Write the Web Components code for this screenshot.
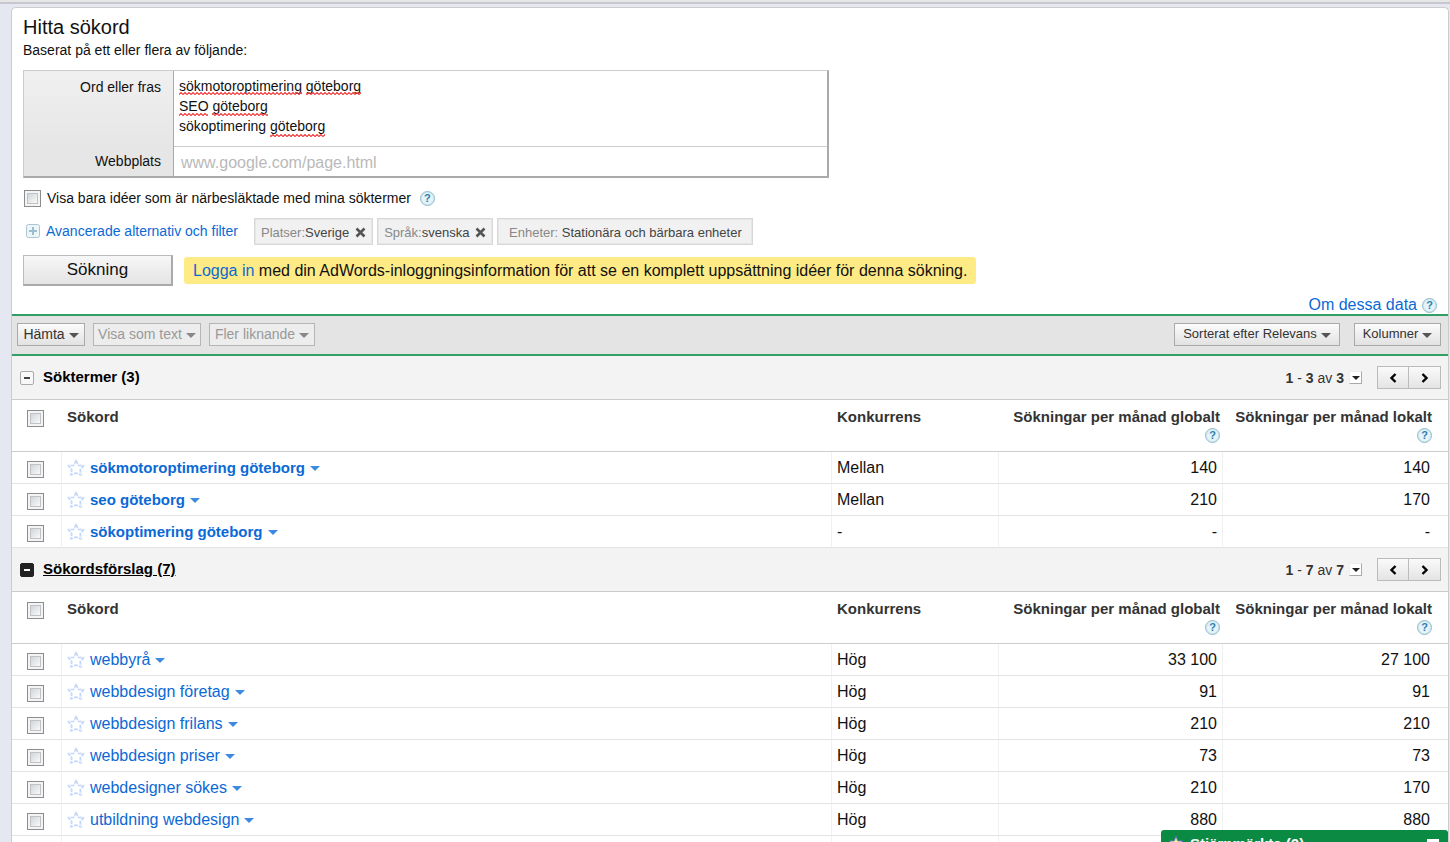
<!DOCTYPE html>
<html lang="sv">
<head>
<meta charset="utf-8">
<title>Hitta sökord</title>
<style>
html, body { margin: 0; height: 100%; }
body { overflow: hidden; background: #e5e8f0; font-family: "Liberation Sans", Arial, sans-serif; color: #111; }
</style>
</head>
<body>
<keyword-app></keyword-app>
<script>
const base = `<style>
*, *::before, *::after { box-sizing: border-box; }
a { color: #0b69d6; text-decoration: none; }
button, input, textarea { font-family: inherit; margin: 0; }
</style>`;

function define(name, html, setup) {
  const template = document.createElement('template');
  template.innerHTML = base + html;
  customElements.define(name, class extends HTMLElement {
    constructor() {
      super();
      this.attachShadow({ mode: 'open' }).append(template.content.cloneNode(true));
    }
    connectedCallback() {
      if (setup && !this.ready) { this.ready = true; setup(this, this.shadowRoot); }
    }
  });
}

define('help-dot', `<style>
:host { display: inline-block; width: 15px; height: 15px; vertical-align: middle; }
a { display: block; width: 15px; height: 15px; border: 1px solid #8fbccb; border-radius: 50%; background: #e6f4f9;
  box-shadow: inset 0 0 0 1px #cfe6ee; color: #2f7fae; font-size: 11px; line-height: 13px; font-weight: bold; text-align: center; }
</style><a href="#" aria-label="Hjälp">?</a>`);

define('tick-box', `<style>
:host { display: inline-block; width: 17px; height: 17px; }
input { appearance: none; display: block; width: 17px; height: 17px; border: 1px solid #8a8c8e; border-radius: 0;
  background: linear-gradient(135deg, #c4c9d0, #f6f6f6 75%); box-shadow: inset 0 0 0 2px #f4f4f4, inset 0 0 0 3px #bfc3c8; }
</style><input type="checkbox">`, (host, root) => {
  root.querySelector('input').setAttribute('aria-label', host.getAttribute('label'));
});

define('filter-chip', `<style>
:host { display: flex; align-items: center; height: 27px; padding: 2px 6px 0; border: 1px solid #d8d8d8; background: #f1f1f1;
  box-shadow: inset 0 0 0 1px #e6e6e6; font-size: 13px; color: #444; white-space: pre; }
:host([wide]) { min-width: 256px; justify-content: center; }
.name { color: #888; }
button { display: none; width: 11px; height: 11px; padding: 0; border: 0; margin-left: 6px; background: none; }
:host([removable]) button { display: block; }
svg { display: block; }
</style><span class="name"><slot name="name"></slot></span><slot></slot>
<button aria-label="Ta bort"><svg width="11" height="11" viewBox="0 0 11 11"><path d="M1.5 1.5 9.5 9.5M9.5 1.5 1.5 9.5" stroke="#555" stroke-width="2.6"/></svg></button>`);

define('menu-button', `<style>
:host { display: block; }
button { display: flex; align-items: center; justify-content: center; gap: 4px; width: 100%; height: 23px; padding: 0 5px;
  border: 1px solid #aaa; background: linear-gradient(#fbfbfb, #e2e2e2); color: #333; font-size: 14px; line-height: 20px; white-space: nowrap; }
i { border: 5px solid transparent; border-top-color: #555; border-bottom: 0; margin-top: 3px; }
:host([disabled]) button { background: #ededed; border-color: #b5b5b5; color: #999; }
:host([disabled]) i { border-top-color: #888; }
:host([small]) button { font-size: 13px; }
</style><button><slot></slot><i></i></button>`, (host, root) => {
  root.querySelector('button').disabled = host.hasAttribute('disabled');
});

define('page-nav', `<style>
:host { display: flex; align-items: center; font-size: 14px; color: #333; }
.pick { width: 13px; height: 13px; padding: 0; margin: 0 15px 0 5px; border: 1px solid #eee; border-right-color: #aaa; border-bottom-color: #aaa;
  background: #fff; display: flex; align-items: center; justify-content: center; }
.pick i { border: 4px solid transparent; border-top-color: #222; border-bottom: 0; }
.step { width: 32px; height: 23px; padding: 0; border: 1px solid #bbb; background: linear-gradient(#fafafa, #e4e4e4); display: flex; align-items: center; justify-content: center; }
.step + .step { border-left: 0; }
</style><span><slot></slot></span><button class="pick" aria-label="Välj sida"><i></i></button>
<button class="step" aria-label="Föregående"><svg width="8" height="10" viewBox="0 0 8 10"><path d="M6.5 1 2.5 5l4 4" fill="none" stroke="#000" stroke-width="2.4"/></svg></button>
<button class="step" aria-label="Nästa"><svg width="8" height="10" viewBox="0 0 8 10"><path d="M1.5 1l4 4-4 4" fill="none" stroke="#000" stroke-width="2.4"/></svg></button>`);

define('keyword-form', `<style>
:host { display: block; padding: 7px 11px 0 11px; font-size: 14px; }
h1 { margin: 0; font-size: 20px; line-height: 24px; font-weight: normal; }
p { margin: 1px 0 10px; line-height: 20px; }
.box { display: grid; grid-template-columns: 150px 1fr; width: 806px; max-width: 100%; border: 1px solid #ccc; border-right: 2px solid #aaa; border-bottom: 2px solid #aaa; }
.box label { padding: 6px 12px 0 0; text-align: right; line-height: 20px; border-right: 1px solid #aaa; background: #efefef; }
.box label[for=site] { padding-top: 4px; background: #e6e6e6; }
.box label[for=words] { background: linear-gradient(#f0f0f0, #e6e6e6); }
.area { position: relative; border-bottom: 1px solid #ccc; height: 76px; }
textarea { display: block; width: 100%; height: 75px; resize: none; border: 0; outline: 0; padding: 5px 5px 0; font-size: 14px; line-height: 20px; color: #111; background: #fff; overflow: hidden; }
.spell { position: absolute; left: 5px; top: 0; pointer-events: none; }
input[type=url] { display: block; width: 100%; height: 29px; border: 0; outline: 0; padding: 2px 7px 0; font-size: 16px; background: #fff; }
input::placeholder { color: #b9b9b9; opacity: 1; }
.row { display: flex; align-items: center; margin-top: 10px; }
.near { height: 20px; gap: 6px; padding-left: 1px; }
.near help-dot { margin-left: 3px; }
.adv { gap: 4px; }
.adv > a { display: flex; align-items: center; gap: 6px; padding: 0 0 2px 3px; margin-right: 12px; }
.go { width: 150px; height: 31px; border: 1px solid #bbb; border-right: 2px solid #aaa; border-bottom: 2px solid #aaa; background: linear-gradient(#f7f7f7, #e4e4e4); font-size: 17px; color: #111; }
.note { margin-left: 11px; height: 27px; line-height: 27px; padding: 0 9px; border-radius: 3px; background: #ffeb86; font-size: 16px; white-space: nowrap; }
.about { display: flex; justify-content: flex-end; gap: 5px; height: 18px; margin-top: 10px; font-size: 16px; line-height: 18px; }
.about help-dot { margin-top: 2px; }
</style>
<h1>Hitta sökord</h1>
<p>Baserat på ett eller flera av följande:</p>
<div class="box">
<label for="words">Ord eller fras</label>
<div class="area"><textarea id="words" spellcheck="false">sökmotoroptimering göteborg
SEO göteborg
sökoptimering göteborg</textarea>
<svg class="spell" width="200" height="72" aria-hidden="true"><defs><pattern id="w" width="4" height="3" patternUnits="userSpaceOnUse"><path d="M-1 3.5 2 .5 5 3.5" fill="none" stroke="#e33" stroke-width="1.1"/></pattern></defs>
<g fill="url(#w)"><rect y="21" width="123" height="3"/><rect x="127" y="21" width="55" height="3"/><rect y="42" width="29" height="3"/><rect x="33" y="42" width="56" height="3"/><rect x="91" y="63" width="55" height="3"/></g></svg></div>
<label for="site">Webbplats</label>
<input id="site" type="url" placeholder="www.google.com/page.html">
</div>
<div class="row near"><tick-box label="Visa bara närbesläktade idéer"></tick-box><span>Visa bara idéer som är närbesläktade med mina söktermer</span><help-dot></help-dot></div>
<div class="row adv"><a href="#"><svg width="14" height="14" viewBox="0 0 14 14"><rect x=".5" y=".5" width="13" height="13" rx="2" fill="#eef5f8" stroke="#a9c6d2"/><path d="M3 7h8M7 3v8" stroke="#9dbecb" stroke-width="2"/></svg>Avancerade alternativ och filter</a>
<filter-chip removable><span slot="name">Platser:</span>Sverige</filter-chip>
<filter-chip removable><span slot="name">Språk:</span>svenska</filter-chip>
<filter-chip wide><span slot="name">Enheter: </span>Stationära och bärbara enheter</filter-chip></div>
<div class="row"><button class="go">Sökning</button><div class="note"><a href="#">Logga in</a> med din AdWords-inloggningsinformation för att se en komplett uppsättning idéer för denna sökning.</div></div>
<div class="about"><a href="#">Om dessa data</a><help-dot></help-dot></div>`);

define('tool-bar', `<style>
:host { display: flex; align-items: center; gap: 8px; height: 42px; padding: 0 7px 2px 5px; border: solid #32a066; border-width: 2px 0; background: #e4e4e4; }
.fill { flex: 1; }
.a { width: 68px; } .b { width: 108px; } .c { width: 106px; } .d { width: 166px; margin-right: 6px; } .e { width: 87px; }
</style><menu-button class="a">Hämta</menu-button><menu-button class="b" disabled>Visa som text</menu-button><menu-button class="c" disabled>Fler liknande</menu-button>
<span class="fill"></span><menu-button class="d" small>Sorterat efter Relevans</menu-button><menu-button class="e" small>Kolumner</menu-button>`);

define('keyword-table', `<style>
:host { display: block; }
header { display: flex; align-items: center; height: 44px; padding: 0 7px 0 8px; background: #f3f3f3; border-bottom: 1px solid #ccc; }
.fold { display: block; width: 14px; height: 14px; padding: 0; border: 1px solid #aaa; border-radius: 2px; background: #f8f8f8; margin-right: 9px; }
.fold::before { content: ""; display: block; width: 6px; height: 2px; margin: 0 auto; background: #444; }
:host([active]) .fold { background: #222; border-color: #222; }
:host([active]) .fold::before { background: #fff; }
h2 { flex: 1; margin: 0; padding-bottom: 2px; font-size: 15px; line-height: 20px; color: #000; }
:host([active]) h2 { text-decoration: underline; }
table { width: 100%; table-layout: fixed; border-collapse: separate; border-spacing: 0; background: #fff; font-size: 16px; }
th { height: 52px; padding: 8px 3px 0 5px; border-bottom: 1px solid #ccc; vertical-align: top; text-align: left; font-size: 15px; line-height: 18px; color: #333; white-space: nowrap; }
th help-dot { display: block; margin: 2px 0 0 auto; }
td { height: 32px; padding: 0 5px; border-bottom: 1px solid #e2e2e2; border-right: 1px solid #f0f0f0; line-height: 20px; white-space: nowrap; }
td:last-child { border-right: 0; }
.num { text-align: right; }
th.num:last-child { padding-right: 16px; }
td.num:last-child { padding-right: 18px; }
th:first-child { padding: 10px 0 0 15px; } td:first-child { padding: 3px 0 0 15px; }
tick-box { display: block; }
.word { display: flex; align-items: center; gap: 5px; }
.word i { border: 5px solid transparent; border-top-color: #3d8be0; border-bottom: 0; margin-top: 1px; }
:host([strong]) .word a { font-weight: bold; font-size: 15px; }
.col-tick { width: 50px; } .col-comp { width: 167px; } .col-global { width: 224px; } .col-local { width: 225px; }
</style>
<header><button class="fold" aria-label="Visa eller dölj"></button><h2><slot></slot></h2><page-nav></page-nav></header>
<table><colgroup><col class="col-tick"><col><col class="col-comp"><col class="col-global"><col class="col-local"></colgroup>
<thead><tr><th><tick-box label="Markera alla"></tick-box></th><th>Sökord</th><th>Konkurrens</th><th class="num">Sökningar per månad globalt<help-dot></help-dot></th><th class="num">Sökningar per månad lokalt<help-dot></help-dot></th></tr></thead>
<tbody></tbody></table>`, (host, root) => {
  const rows = keywords[host.getAttribute('list')];
  root.querySelector('page-nav').innerHTML = `<b>1</b> - <b>${rows.length}</b> av <b>${rows.length}</b>`;
  root.querySelector('tbody').innerHTML = rows.map(([word, comp, global, local]) => word ? `<tr>
<td><tick-box label="${word}"></tick-box></td>
<td><div class="word"><svg width="18" height="18" viewBox="0 0 18 18"><path d="M9 1.5 11.2 6.3 16.6 6.6 13.2 10.7 14 16 9 14 4 16 4.8 10.7 1.4 6.6 6.8 6.3Z" fill="#fff" stroke="#c3d8fb" stroke-width="1.7" stroke-linejoin="round" stroke-dasharray="4 1"/></svg><a href="#">${word}</a><i></i></div></td>
<td>${comp}</td><td class="num">${global}</td><td class="num">${local}</td></tr>` : '<tr><td></td><td></td><td></td><td></td><td></td></tr>').join('');
});

define('starred-bar', `<style>
:host { position: fixed; right: 2px; bottom: -14px; width: 287px; height: 26px; display: flex; align-items: center; gap: 7px; padding: 0 9px 0 8px;
  background: #0b8a43; border-radius: 3px 3px 0 0; color: #fff; font-size: 15px; font-weight: bold; }
span { flex: 1; }
button { width: 12px; height: 8px; padding: 0; border: 0; border-top: 3px solid #fff; background: none; }
</style><svg width="14" height="14" viewBox="0 0 14 14"><path d="M7 0 8.8 4.8 14 5 10 8.3 11.3 13.5 7 10.6 2.7 13.5 4 8.3 0 5 5.2 4.8Z" fill="#f7e9a0" stroke="#4a74b8"/></svg><span>Stjärnmärkta (0)</span><button aria-label="Minimera"></button>`);

const keywords = {
  terms: [
    ['sökmotoroptimering göteborg', 'Mellan', '140', '140'],
    ['seo göteborg', 'Mellan', '210', '170'],
    ['sökoptimering göteborg', '-', '-', '-']
  ],
  ideas: [
    ['webbyrå', 'Hög', '33 100', '27 100'],
    ['webbdesign företag', 'Hög', '91', '91'],
    ['webbdesign frilans', 'Hög', '210', '210'],
    ['webbdesign priser', 'Hög', '73', '73'],
    ['webdesigner sökes', 'Hög', '210', '170'],
    ['utbildning webdesign', 'Hög', '880', '880'],
    []
  ]
};

define('keyword-app', `<style>
:host { display: flex; flex-direction: column; height: 100vh; overflow: hidden; }
.strip { flex: none; height: 4px; background: #e6e6e6; border-bottom: 2px solid #c6c8ce; }
main { flex: 1 0 auto; margin: 3px 1px 0 11px; border: 1px solid #ccc; border-bottom: 0; border-radius: 5px 5px 0 0; background: #fff; }
</style><div class="strip"></div><main><keyword-form></keyword-form><tool-bar></tool-bar>
<keyword-table list="terms" strong>Söktermer (3)</keyword-table>
<keyword-table list="ideas" active>Sökordsförslag (7)</keyword-table></main><starred-bar></starred-bar>`);
</script>
</body>
</html>
